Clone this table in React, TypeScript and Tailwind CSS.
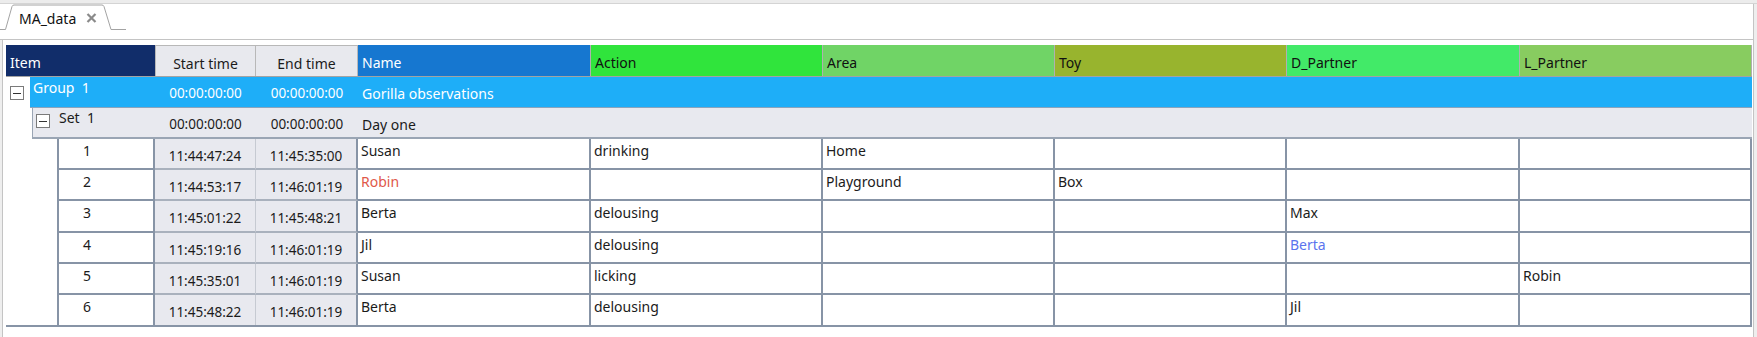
import React from "react";

const COLS = [
  { name: "Name", w: "w-[233px]", bg: "bg-[#1677d0]", fg: "text-white" },
  { name: "Action", w: "w-[232px]", bg: "bg-[#30e43c]", fg: "text-[#111]" },
  { name: "Area", w: "w-[232px]", bg: "bg-[#70d466]", fg: "text-[#111]" },
  { name: "Toy", w: "w-[232px]", bg: "bg-[#98b42e]", fg: "text-[#111]" },
  { name: "D_Partner", w: "w-[233px]", bg: "bg-[#42ea68]", fg: "text-[#111]" },
  { name: "L_Partner", w: "w-[232px]", bg: "bg-[#88cc60]", fg: "text-[#111]" },
];

type Cell = { t: string; c?: string };
type Row = { n: string; s: string; e: string; h: string; cells: Cell[] };

const ROWS: Row[] = [
  { n: "1", s: "11:44:47:24", e: "11:45:35:00", h: "h-[31px]", cells: [{ t: "Susan" }, { t: "drinking" }, { t: "Home" }, { t: "" }, { t: "" }, { t: "" }] },
  { n: "2", s: "11:44:53:17", e: "11:46:01:19", h: "h-[31px]", cells: [{ t: "Robin", c: "text-[#e0584a]" }, { t: "" }, { t: "Playground" }, { t: "Box" }, { t: "" }, { t: "" }] },
  { n: "3", s: "11:45:01:22", e: "11:45:48:21", h: "h-[32px]", cells: [{ t: "Berta" }, { t: "delousing" }, { t: "" }, { t: "" }, { t: "Max" }, { t: "" }] },
  { n: "4", s: "11:45:19:16", e: "11:46:01:19", h: "h-[31px]", cells: [{ t: "Jil" }, { t: "delousing" }, { t: "" }, { t: "" }, { t: "Berta", c: "text-[#5b74ee]" }, { t: "" }] },
  { n: "5", s: "11:45:35:01", e: "11:46:01:19", h: "h-[31px]", cells: [{ t: "Susan" }, { t: "licking" }, { t: "" }, { t: "" }, { t: "" }, { t: "Robin" }] },
  { n: "6", s: "11:45:48:22", e: "11:46:01:19", h: "h-[30px]", cells: [{ t: "Berta" }, { t: "delousing" }, { t: "" }, { t: "" }, { t: "Jil" }, { t: "" }] },
];

function MinusBox() {
  return (
    <div className="w-[14px] h-[14px] border border-[#7a7a7a] bg-white flex items-center justify-center shrink-0">
      <div className="w-[8px] h-[1px] bg-[#333]" />
    </div>
  );
}

export default function App() {
  return (
    <div className="w-[1757px] h-[337px] bg-[#eeeeee] flex flex-col overflow-hidden font-['Noto_Sans','Segoe_UI',sans-serif] text-[14px] text-[#1b1b1b]">
      {/* top band */}
      <div className="h-[4px] bg-[#ececec] border-b border-[#d4d4d4] shrink-0" />
      {/* tab strip */}
      <div className="h-[36px] w-[1754px] bg-white border-b border-r border-[#c4c4c4] shrink-0">
        <div className="relative w-[126px] h-[26px]">
          <svg className="absolute inset-0" width="126" height="26" viewBox="0 0 126 26">
            <path d="M0 25.5 L5.5 25.5 L12 2.5 Q12.6 1 14 1 L102 1 Q103.4 1 104 2.5 L111 25.5 L126 25.5" fill="white" stroke="#a3a3a3" strokeWidth="1" />
          </svg>
          <div className="absolute left-[19px] top-[6px] leading-[18px] text-[14px] text-[#111]">MA_data</div>
          <svg className="absolute left-[86px] top-[9px]" width="11" height="10" viewBox="0 0 11 10">
            <path d="M1.5 1 L9.5 9 M9.5 1 L1.5 9" stroke="#8a8a8a" strokeWidth="2.2" />
          </svg>
        </div>
      </div>
      {/* content */}
      <div className="flex-1 ml-[2px] w-[1752px] bg-white border-l border-r border-[#c4c4c4] pt-[5px] pl-[3px]">
        <div className="w-[1746px] flex flex-col border-b-2 border-[#8794a6]">
          {/* header */}
          <div className="flex h-[32px] border-b border-[#a3a3a3]">
            <div className="w-[149px] bg-[#112d6a] text-white pl-[4px] flex items-center pt-[3px]">Item</div>
            <div className="w-[101px] bg-[#e8e9ee] border-t border-l border-r border-[#b8b8b8] flex items-center justify-center pt-[5px]">Start time</div>
            <div className="w-[102px] bg-[#e8e9ee] border-t border-r border-[#b8b8b8] flex items-center justify-center pt-[5px]">End time</div>
            {COLS.map((c) => (
              <div key={c.name} className={`${c.w} ${c.bg} ${c.fg} border-r border-[#b0b0b0] pl-[4px] flex items-center pt-[3px]`}>
                {c.name}
              </div>
            ))}
          </div>
          {/* group row */}
          <div className="flex h-[31px]">
            <div className="w-[24px] pl-[4px] pt-[9px]">
              <MinusBox />
            </div>
            <div className="flex-1 flex bg-[#1eaef8] text-white border-b border-[#8aa4bc]">
              <div className="w-[125px] pl-[3px] pt-[1px] leading-[20px] whitespace-pre">Group  1</div>
              <div className="w-[101px] flex items-center justify-center pt-[3px] text-[13.5px]">00:00:00:00</div>
              <div className="w-[102px] flex items-center justify-center pt-[3px] text-[13.5px]">00:00:00:00</div>
              <div className="pl-[4px] flex items-center pt-[3px]">Gorilla observations</div>
            </div>
          </div>
          {/* set row */}
          <div className="flex h-[31px]">
            <div className="w-[26px]" />
            <div className="flex-1 flex bg-[#e8e9ef] border-l border-b-2 border-[#9aa5b4]">
              <div className="w-[122px] pl-[3px] pt-[6px] flex items-start gap-[9px]">
                <MinusBox />
                <span className="leading-[18px] -mt-[5px] whitespace-pre">Set  1</span>
              </div>
              <div className="w-[101px] flex items-center justify-center pt-[3px] text-[13.5px]">00:00:00:00</div>
              <div className="w-[102px] flex items-center justify-center pt-[3px] text-[13.5px]">00:00:00:00</div>
              <div className="pl-[4px] flex items-center pt-[3px]">Day one</div>
            </div>
          </div>
          {/* data rows */}
          {ROWS.map((r, i) => {
            const last = i === ROWS.length - 1;
            const bb = last ? "" : "border-b-2";
            return (
              <div key={r.n} className={`flex ${r.h}`}>
                <div className="w-[51px]" />
                <div className={`w-[98px] border-l-2 border-r-2 ${bb} border-[#8794a6] pl-[24px] pt-[3px] leading-[18px]`}>{r.n}</div>
                <div className={`w-[101px] bg-[#e8e9ef] border-r ${bb} border-r-[#c6cad2] border-b-[#a9b1bd] flex items-center justify-center pt-[5px] text-[13.5px]`}>{r.s}</div>
                <div className={`w-[102px] bg-[#e8e9ef] border-r-2 ${bb} border-r-[#8794a6] border-b-[#a9b1bd] flex items-center justify-center pt-[5px] text-[13.5px]`}>{r.e}</div>
                {r.cells.map((c, j) => (
                  <div key={j} className={`${COLS[j].w} border-r-2 ${bb} border-[#8794a6] pl-[3px] pt-[3px] leading-[18px] ${c.c ?? ""}`}>
                    {c.t}
                  </div>
                ))}
              </div>
            );
          })}
        </div>
      </div>
    </div>
  );
}
